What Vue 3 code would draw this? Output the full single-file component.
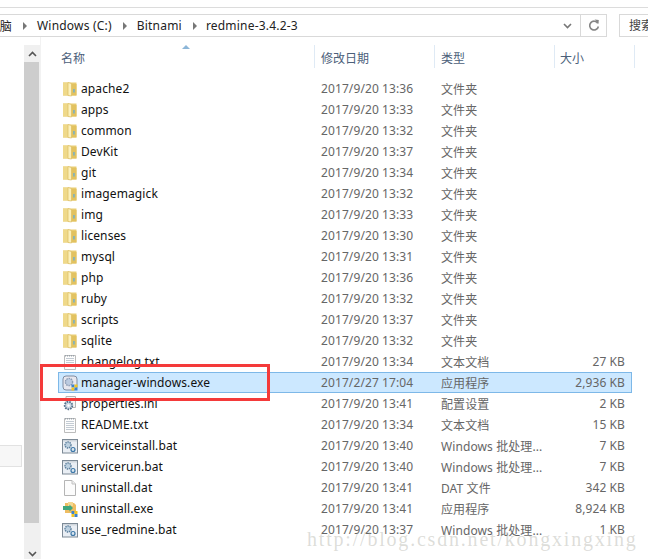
<script setup>
const rows = [
  { name: "apache2", date: "2017/9/20 13:36", type: "文件夹", size: "", icon: "folder" },
  { name: "apps", date: "2017/9/20 13:33", type: "文件夹", size: "", icon: "folder" },
  { name: "common", date: "2017/9/20 13:32", type: "文件夹", size: "", icon: "folder" },
  { name: "DevKit", date: "2017/9/20 13:37", type: "文件夹", size: "", icon: "folder" },
  { name: "git", date: "2017/9/20 13:34", type: "文件夹", size: "", icon: "folder" },
  { name: "imagemagick", date: "2017/9/20 13:32", type: "文件夹", size: "", icon: "folder" },
  { name: "img", date: "2017/9/20 13:33", type: "文件夹", size: "", icon: "folder" },
  { name: "licenses", date: "2017/9/20 13:30", type: "文件夹", size: "", icon: "folder" },
  { name: "mysql", date: "2017/9/20 13:31", type: "文件夹", size: "", icon: "folder" },
  { name: "php", date: "2017/9/20 13:36", type: "文件夹", size: "", icon: "folder" },
  { name: "ruby", date: "2017/9/20 13:32", type: "文件夹", size: "", icon: "folder" },
  { name: "scripts", date: "2017/9/20 13:37", type: "文件夹", size: "", icon: "folder" },
  { name: "sqlite", date: "2017/9/20 13:32", type: "文件夹", size: "", icon: "folder" },
  { name: "changelog.txt", date: "2017/9/20 13:34", type: "文本文档", size: "27 KB", icon: "text" },
  { name: "manager-windows.exe", date: "2017/2/27 17:04", type: "应用程序", size: "2,936 KB", icon: "manager", selected: true },
  { name: "properties.ini", date: "2017/9/20 13:41", type: "配置设置", size: "2 KB", icon: "ini" },
  { name: "README.txt", date: "2017/9/20 13:34", type: "文本文档", size: "15 KB", icon: "text" },
  { name: "serviceinstall.bat", date: "2017/9/20 13:40", type: "Windows 批处理...", size: "7 KB", icon: "bat" },
  { name: "servicerun.bat", date: "2017/9/20 13:40", type: "Windows 批处理...", size: "7 KB", icon: "bat" },
  { name: "uninstall.dat", date: "2017/9/20 13:41", type: "DAT 文件", size: "342 KB", icon: "blank" },
  { name: "uninstall.exe", date: "2017/9/20 13:41", type: "应用程序", size: "8,924 KB", icon: "uninstall" },
  { name: "use_redmine.bat", date: "2017/9/20 13:37", type: "Windows 批处理...", size: "1 KB", icon: "bat" },
];
</script>

<template>
  <div class="window">
    <div class="toolbar">
      <div class="address">
        <div class="crumbs">
          <span class="crumb cut">脑</span>
          <i class="sep"></i>
          <span class="crumb">Windows (C:)</span>
          <i class="sep"></i>
          <span class="crumb">Bitnami</span>
          <i class="sep"></i>
          <span class="crumb">redmine-3.4.2-3</span>
        </div>
        <div class="addr-btn chevron">
          <svg width="9" height="6" viewBox="0 0 9 6"><path d="M1 1l3.5 3.5L8 1" fill="none" stroke="#777" stroke-width="1.6" /></svg>
        </div>
        <div class="addr-btn refresh">
          <svg width="12" height="13" viewBox="0 0 12 13">
            <path d="M9.8 4.2A4.4 4.4 0 1 0 10.4 7.5" fill="none" stroke="#858585" stroke-width="1.6" />
            <path d="M6.6 0.5l4.2 0.4-0.4 4.2z" fill="#858585" />
          </svg>
        </div>
      </div>
      <div class="search">搜索</div>
    </div>

    <div class="body">
      <aside class="nav">
        <div class="nav-box"></div>
      </aside>

      <div class="scrollbar">
        <div class="sb-btn">
          <svg width="9" height="6" viewBox="0 0 9 6"><path d="M1 5l3.5-3.5L8 5" fill="none" stroke="#555" stroke-width="1.6" /></svg>
        </div>
        <div class="sb-thumb"></div>
        <div class="sb-btn low">
          <svg width="9" height="6" viewBox="0 0 9 6"><path d="M1 1l3.5 3.5L8 1" fill="none" stroke="#555" stroke-width="1.6" /></svg>
        </div>
      </div>

      <div class="list">
        <div class="head">
          <span class="sort"></span>
          <div class="hcol name-col">名称</div>
          <div class="hcol date-col">修改日期</div>
          <div class="hcol type-col">类型</div>
          <div class="hcol size-col">大小</div>
          <div class="hcol tail-col"></div>
        </div>

        <div class="rows">
          <div v-for="row in rows" :key="row.name" class="row" :class="{ selected: row.selected }">
            <div class="name-cell">
              <svg class="icon" width="16" height="16" viewBox="0 0 16 16">
                <template v-if="row.icon === 'folder'">
                  <path d="M1 1.500h13.500v13H1z" fill="#e8cc72" />
                  <path d="M1 1.500h5v13H1z" fill="#efd98a" />
                  <path d="M6 1.500l3.500 1v12.500L6 14.500z" fill="#fbf0bb" stroke="#dcbd60" stroke-width=".7" />
                  <path d="M9.800 3h4.700v11.500H9.800z" fill="#e2c260" />
                  <path d="M11.300 8h1.300v3.500h-1.300z" fill="#62aedb" />
                </template>
                <template v-else-if="row.icon === 'text'">
                  <path d="M2.500 1.500h11v14h-11z" fill="#fdfdfd" stroke="#bcbcbc" />
                  <path d="M3 1h1v1.500H3zM5 1h1v1.500H5zM7 1h1v1.500H7zM9 1h1v1.500H9zM11 1h1v1.500h-1z" fill="#9aa3ab" />
                  <path d="M4 4.500h8M4 6.500h8M4 8.500h8M4 10.500h8M4 12.500h8" stroke="#c3cbd3" stroke-width="1" />
                </template>
                <template v-else-if="row.icon === 'blank'">
                  <path d="M2.500 .5H10L13.500 4v11.500h-11z" fill="#fcfcfc" stroke="#b5b5b5" />
                  <path d="M10 .5V4h3.500" fill="#eee" stroke="#c2c2c2" />
                </template>
                <template v-else-if="row.icon === 'bat'">
                  <rect x=".5" y="1.500" width="15" height="13.500" fill="#e9eef4" stroke="#7d8a96" />
                  <path d="M1 2h14v1.500H1z" fill="#cfd6dd" />
                  <circle cx="6" cy="7" r="3" fill="#bcd0e0" stroke="#5c7f9c" stroke-width="1.400" stroke-dasharray="1.400 .8" />
                  <circle cx="11" cy="11.500" r="2" fill="#dbe6ef" stroke="#3d78a8" stroke-width="1.200" />
                </template>
                <template v-else-if="row.icon === 'ini'">
                  <path d="M4 .5h9.500v11H4z" fill="#f6f6f6" stroke="#b5b5b5" />
                  <circle cx="6.500" cy="9.500" r="3.800" fill="#c9d6e2" stroke="#53718c" stroke-width="1.800" stroke-dasharray="1.600 1" />
                  <circle cx="6.500" cy="9.500" r="1.200" fill="#fff" />
                </template>
                <template v-else-if="row.icon === 'manager'">
                  <rect x="1" y="1" width="14" height="14" rx="3" fill="#e7e7ee" stroke="#7f8ba0" />
                  <circle cx="7" cy="7" r="3.600" fill="#bccbe0" stroke="#8b9bb3" stroke-width="1.400" stroke-dasharray="1.500 .8" />
                  <path d="M9.500 9.500h3v3h-3z" fill="#3d82cc" />
                  <path d="M12.500 9.500h3v3h-3z" fill="#f3c623" />
                  <path d="M9.500 12.500h3v3h-3z" fill="#f3c623" />
                  <path d="M12.500 12.500h3v3h-3z" fill="#3d82cc" />
                </template>
                <template v-else>
                  <path d="M3 2h9l2 2v8H3z" fill="#eebd62" />
                  <path d="M6 1h5v4H6z" fill="#f5d892" />
                  <path d="M1 5h6.500V3.500l3.500 3.500-3.500 3.500V9H1z" fill="#3fa77e" />
                  <path d="M9.500 10h3v3h-3z" fill="#3d82cc" />
                  <path d="M12.500 10h3v3h-3z" fill="#f3c623" />
                  <path d="M9.500 13h3v3h-3z" fill="#f3c623" />
                  <path d="M12.500 13h3v3h-3z" fill="#3d82cc" />
                </template>
              </svg>
              <span class="file-name">{{ row.name }}</span>
            </div>
            <div class="date-cell">{{ row.date }}</div>
            <div class="type-cell">{{ row.type }}</div>
            <div class="size-cell">{{ row.size }}</div>
          </div>
        </div>
      </div>
    </div>

    <div class="highlight"></div>
    <div class="watermark">http://blog.csdn.net/kongxingxing</div>
  </div>
</template>

<style>
html,
body {
  margin: 0;
  background: #fff;
}
</style>

<style scoped>
.window {
  position: relative;
  width: 648px;
  height: 559px;
  overflow: hidden;
  background: #fff;
  font-family: "Noto Sans", "Noto Sans CJK SC", sans-serif;
  font-size: 12px;
  color: #111;
}

.toolbar {
  height: 37px;
  box-sizing: border-box;
  padding-top: 14px;
  display: flex;
  position: relative;
}

.toolbar::before {
  content: "";
  position: absolute;
  left: 0;
  right: 0;
  top: 7px;
  height: 1px;
  background: #dcdcdc;
}

.address {
  width: 607px;
  height: 23px;
  box-sizing: border-box;
  border: 1px solid #d9d9d9;
  border-left: 0;
  display: flex;
  align-items: center;
}

.crumbs {
  flex: 1;
  display: flex;
  align-items: center;
  font-size: 12px;
  color: #222;
  letter-spacing: 0.2px;
}

.crumb.cut {
  width: 12px;
  overflow: hidden;
  direction: rtl;
}

.sep {
  width: 0;
  height: 0;
  margin: 0 10px 0 11px;
  border-left: 4px solid #777;
  border-top: 4px solid transparent;
  border-bottom: 4px solid transparent;
}

.sep:last-of-type {
  margin-right: 9px;
}

.addr-btn {
  height: 21px;
  display: flex;
  align-items: center;
  justify-content: center;
}

.chevron {
  width: 25px;
  border-right: 1px solid #d9d9d9;
}

.refresh {
  width: 25px;
}

.search {
  margin-left: 12px;
  flex: 1;
  min-width: 0;
  height: 23px;
  box-sizing: border-box;
  border: 1px solid #d9d9d9;
  border-right: 0;
  padding-left: 9px;
  line-height: 21px;
  color: #444;
  white-space: nowrap;
  overflow: hidden;
}

.body {
  display: flex;
  height: 522px;
}

.nav {
  width: 24px;
}

.nav-box {
  margin-top: 408px;
  width: 22px;
  height: 22px;
  box-sizing: border-box;
  background: #f7f7f7;
  border: 1px solid #e2e2e2;
  border-left: 0;
}

.scrollbar {
  width: 16px;
  margin-top: 8px;
  background: #f0f0f0;
  display: flex;
  flex-direction: column;
}

.sb-btn {
  height: 17px;
  display: flex;
  align-items: center;
  justify-content: center;
  flex-shrink: 0;
}

.sb-thumb {
  flex: 1;
  width: 15px;
  background: #cdcdcd;
}

.sb-btn.low {
  height: 36px;
  box-sizing: border-box;
  align-items: flex-end;
  padding-bottom: 2px;
}

.list {
  flex: 1;
  min-width: 0;
  border-left: 1px solid #f2f2f2;
}

.head {
  position: relative;
  height: 33px;
  margin-top: 8px;
  display: grid;
  grid-template-columns: 257px 120px 120px 80px 14px;
  padding-left: 17px;
  color: #4c607a;
}

.hcol {
  padding: 4px 0 0 3px;
  height: 23px;
  box-sizing: border-box;
  border-right: 1px solid #dfeaf5;
}

.tail-col {
  border-right: 0;
}

.date-col,
.type-col,
.size-col {
  padding-left: 6px;
}

.size-col {
  padding-left: 5px;
}

.sort {
  position: absolute;
  left: 141px;
  top: 0;
  border-left: 4px solid transparent;
  border-right: 4px solid transparent;
  border-bottom: 4px solid #8cb6d8;
}

.row {
  height: 21px;
  display: grid;
  grid-template-columns: 257px 120px 120px 70px;
  margin-left: 17px;
  width: 574px;
  box-sizing: border-box;
  align-items: center;
  color: #666;
  letter-spacing: 0.1px;
}

.row.selected {
  background: #cce8ff;
  box-shadow: inset 0 0 0 1px #7db8e8;
}

.name-cell {
  display: flex;
  align-items: center;
  padding-left: 4px;
  color: #111;
  gap: 3px;
}

.icon {
  flex-shrink: 0;
}

.file-name {
  white-space: nowrap;
}

.date-cell,
.type-cell {
  padding-left: 6px;
  white-space: nowrap;
}

.size-cell {
  text-align: right;
  white-space: nowrap;
}

.highlight {
  position: absolute;
  left: 40px;
  top: 364px;
  width: 230px;
  height: 37px;
  box-sizing: border-box;
  border: 3px solid #f43a3a;
  pointer-events: none;
}

.watermark {
  position: absolute;
  left: 307px;
  top: 528px;
  font-family: "Liberation Serif", serif;
  font-size: 20px;
  letter-spacing: 1.8px;
  color: rgba(165, 165, 155, 0.38);
  white-space: nowrap;
}
</style>
